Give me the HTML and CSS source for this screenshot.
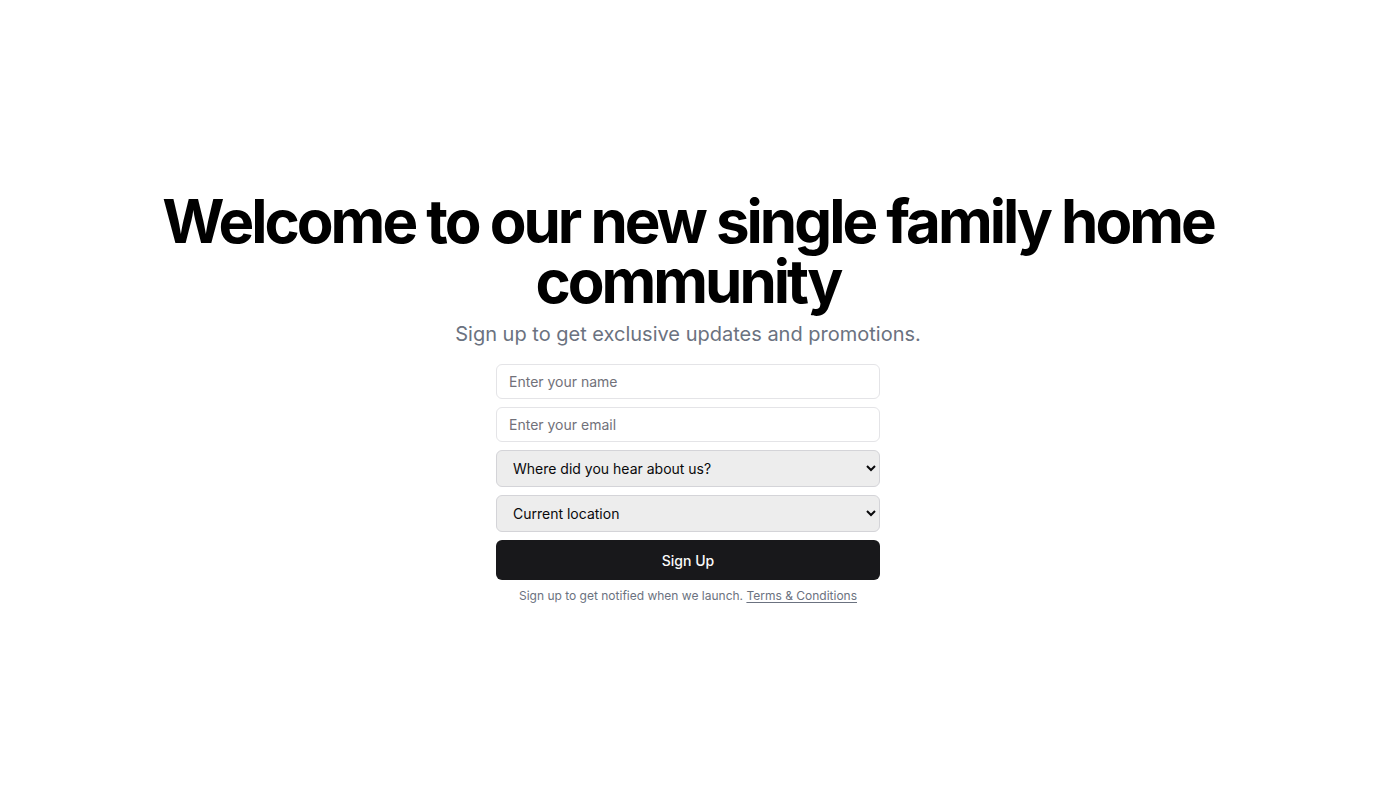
FILE: index.html
```html
<!DOCTYPE html>
<html lang="en">
<head>
<meta charset="utf-8">
<title>Welcome</title>
<link rel="stylesheet" href="styles.css">
</head>
<body>
<main class="page">
  <section class="hero">
    <div class="header">
      <h1 class="title">Welcome to our new single family home community</h1>
      <p class="subtitle">Sign up to get exclusive updates and promotions.</p>
    </div>
    <div class="form-wrap">
      <form class="form">
        <input class="input" type="text" placeholder="Enter your name">
        <input class="input" type="email" placeholder="Enter your email">
        <select class="select">
          <option>Where did you hear about us?</option>
        </select>
        <select class="select">
          <option>Current location</option>
        </select>
        <button class="button" type="button">Sign Up</button>
      </form>
      <p class="note">Sign up to get notified when we launch. <a class="link" href="#">Terms &amp; Conditions</a></p>
    </div>
  </section>
</main>
</body>
</html>
```
FILE: styles.css
```css
* { box-sizing: border-box; }
html, body { margin: 0; padding: 0; }
body {
  font-family: Inter, "Noto Sans", sans-serif;
  background: #ffffff;
  color: #09090b;
}
.page {
  min-height: 100vh;
  display: flex;
  align-items: center;
  justify-content: center;
}
.hero {
  display: flex;
  flex-direction: column;
  align-items: center;
  gap: 16px;
  text-align: center;
  padding-bottom: 1px;
}
.header {
  display: flex;
  flex-direction: column;
  align-items: center;
  gap: 9px;
}
.title {
  margin: 0;
  font-size: 60px;
  line-height: 60px;
  font-weight: 700;
  letter-spacing: -0.05em;
  color: #000;
  max-width: 1100px;
}
.subtitle {
  margin: 0;
  font-size: 20px;
  line-height: 28px;
  color: #6b7280;
}
.form-wrap {
  width: 384px;
  display: flex;
  flex-direction: column;
  gap: 8px;
}
.form {
  display: flex;
  flex-direction: column;
  gap: 8px;
}
.input {
  height: 35px;
  width: 100%;
  border: 1px solid #e4e4e7;
  border-radius: 6px;
  padding: 0 12px;
  font-family: inherit;
  font-size: 14px;
  color: #09090b;
  background: #fff;
  outline: none;
}
.input::placeholder { color: #71717a; }
.select {
  height: 37px;
  width: 100%;
  border: 1px solid #d4d4d8;
  border-radius: 6px;
  padding: 0 12px;
  font-family: inherit;
  font-size: 14px;
  color: #09090b;
  background-color: #ededed;
}
.button {
  height: 40px;
  width: 100%;
  border: none;
  border-radius: 6px;
  background: #18181b;
  color: #fafafa;
  font-family: inherit;
  font-size: 14px;
  font-weight: 500;
}
.note {
  margin: 0;
  font-size: 12px;
  line-height: 16px;
  color: #6b7280;
}
.link {
  color: #6b7280;
  text-decoration: underline;
  text-underline-offset: 2px;
}
```
